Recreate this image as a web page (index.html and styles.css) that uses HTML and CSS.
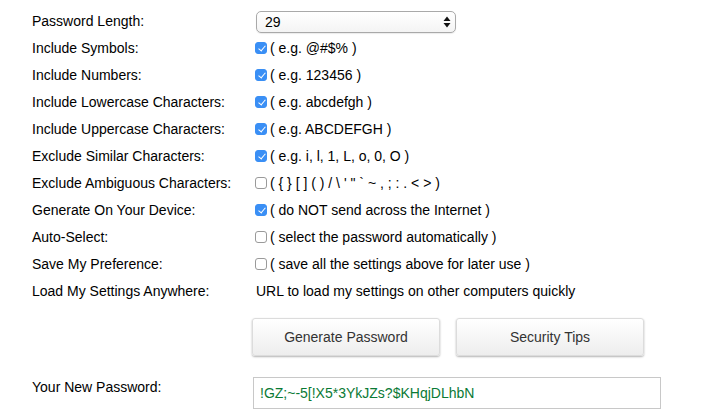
FILE: index.html
```html
<!DOCTYPE html>
<html>
<head>
<meta charset="utf-8">
<link rel="stylesheet" href="styles.css">
</head>
<body>
<div class="form">
  <div class="grid">
    <div class="label">Password Length:</div>
    <div class="field">
      <span class="select-wrap">
        <select class="select"><option>29</option></select>
        <svg class="arrows" width="8" height="12" viewBox="0 0 8 12"><path d="M4 0.5 L7.5 5 L0.5 5 Z M0.5 7 L7.5 7 L4 11.5 Z" fill="#111"/></svg>
      </span>
    </div>

    <div class="label">Include Symbols:</div>
    <div class="field"><input type="checkbox" class="cb" checked><span>( e.g. @#$% )</span></div>

    <div class="label">Include Numbers:</div>
    <div class="field"><input type="checkbox" class="cb" checked><span>( e.g. 123456 )</span></div>

    <div class="label">Include Lowercase Characters:</div>
    <div class="field"><input type="checkbox" class="cb" checked><span>( e.g. abcdefgh )</span></div>

    <div class="label">Include Uppercase Characters:</div>
    <div class="field"><input type="checkbox" class="cb" checked><span>( e.g. ABCDEFGH )</span></div>

    <div class="label">Exclude Similar Characters:</div>
    <div class="field"><input type="checkbox" class="cb" checked><span>( e.g. i, l, 1, L, o, 0, O )</span></div>

    <div class="label">Exclude Ambiguous Characters:</div>
    <div class="field"><input type="checkbox" class="cb"><span class="amb">( { } [ ] ( ) / \ ' " ` ~ , ; : . &lt; &gt; )</span></div>

    <div class="label">Generate On Your Device:</div>
    <div class="field"><input type="checkbox" class="cb" checked><span>( do NOT send across the Internet )</span></div>

    <div class="label">Auto-Select:</div>
    <div class="field"><input type="checkbox" class="cb"><span>( select the password automatically )</span></div>

    <div class="label">Save My Preference:</div>
    <div class="field"><input type="checkbox" class="cb"><span>( save all the settings above for later use )</span></div>

    <div class="label">Load My Settings Anywhere:</div>
    <div class="field"><span class="plain">URL to load my settings on other computers quickly</span></div>
  </div>

  <div class="buttons">
    <button class="btn">Generate Password</button>
    <button class="btn">Security Tips</button>
  </div>

  <div class="result">
    <div class="label result-label">Your New Password:</div>
    <input class="pw" type="text" value="!GZ;~-5[!X5*3YkJZs?$KHqjDLhbN">
  </div>
</div>
</body>
</html>
```
FILE: styles.css
```css
html, body {
  margin: 0;
  padding: 0;
  background: #fff;
}
body {
  font-family: "Liberation Sans", Arial, sans-serif;
  font-size: 14px;
  color: #000;
}
.form {
  padding: 7px 0 0 32px;
}
.grid {
  display: grid;
  grid-template-columns: 223px auto;
  grid-auto-rows: 27px;
}
.label {
  display: flex;
  align-items: center;
  white-space: nowrap;
}
.field {
  display: flex;
  align-items: center;
  white-space: nowrap;
}
.select-wrap {
  position: relative;
  display: inline-block;
  margin-left: 1px;
  margin-top: 2px;
}
.select {
  -webkit-appearance: none;
  appearance: none;
  width: 200px;
  height: 22px;
  border: 1px solid #a9a9a9;
  border-radius: 5px;
  background: linear-gradient(#ffffff, #f4f4f4);
  font-family: "Liberation Sans", Arial, sans-serif;
  font-size: 14px;
  color: #000;
  padding: 0 0 0 8px;
  margin: 0;
  box-shadow: 0 1px 1px rgba(0,0,0,0.08);
}
.arrows {
  position: absolute;
  right: 5px;
  top: 5px;
}
.cb {
  -webkit-appearance: none;
  appearance: none;
  width: 12px;
  height: 12px;
  margin: 1px 3px 0 0;
  border: 1px solid #9a9a9a;
  border-radius: 3px;
  background: #fff;
  position: relative;
  box-sizing: border-box;
}
.cb:checked {
  background: #3a8ff5;
  border-color: #3a8ff5;
}
.cb:checked::after {
  content: "";
  position: absolute;
  left: 3.5px;
  top: 1px;
  width: 3px;
  height: 6px;
  border: solid #fff;
  border-width: 0 1.6px 1.6px 0;
  transform: rotate(40deg);
}
.plain {
  margin-left: 1px;
}
.amb {
  letter-spacing: 0;
}
.buttons {
  display: flex;
  gap: 16px;
  margin: 14px 0 0 220px;
}
.btn {
  width: 188px;
  height: 38px;
  border: 1px solid #dcdcdc;
  border-radius: 3px;
  background: linear-gradient(#ffffff, #ededed);
  box-shadow: 0 1px 2px rgba(0,0,0,0.3);
  font-family: "Liberation Sans", Arial, sans-serif;
  font-size: 14px;
  color: #333;
  margin: 0;
  padding: 0;
}
.result {
  display: flex;
  align-items: flex-start;
  margin-top: 21px;
}
.result-label {
  width: 221px;
  height: 18px;
  padding-top: 1px;
}
.pw {
  width: 408px;
  height: 32px;
  box-sizing: border-box;
  border: 1px solid #c8c8c8;
  border-radius: 0;
  padding: 0 0 0 6px;
  margin: 0;
  font-family: "Liberation Sans", Arial, sans-serif;
  font-size: 14px;
  color: #0a7a35;
  background: #fff;
}
```
